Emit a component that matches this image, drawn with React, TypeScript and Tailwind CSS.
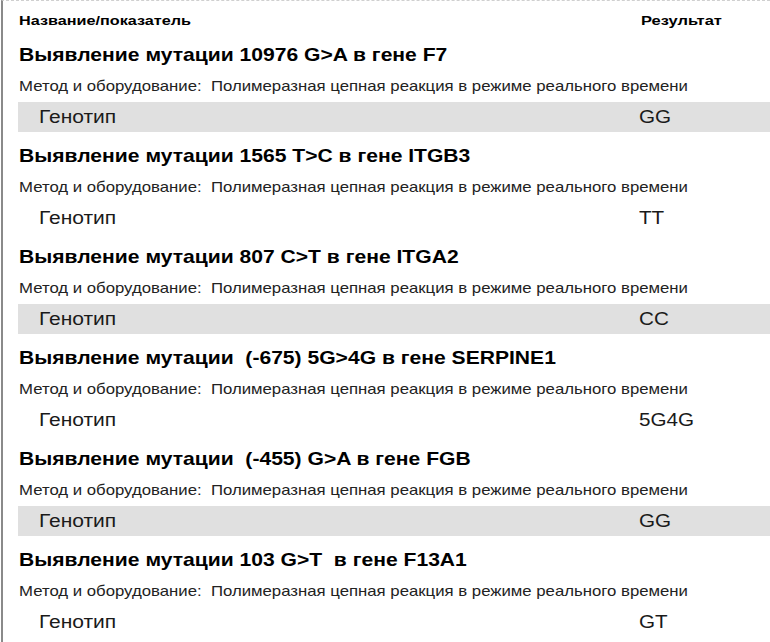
const sections = [
  { title: 'Выявление мутации 10976 G>A в гене F7', value: 'GG' },
  { title: 'Выявление мутации 1565 T>C в гене ITGB3', value: 'TT' },
  { title: 'Выявление мутации 807 C>T в гене ITGA2', value: 'CC' },
  { title: 'Выявление мутации  (-675) 5G>4G в гене SERPINE1', value: '5G4G' },
  { title: 'Выявление мутации  (-455) G>A в гене FGB', value: 'GG' },
  { title: 'Выявление мутации 103 G>T  в гене F13A1', value: 'GT' },
]

export default function App() {
  return (
    <div className="w-[770px] h-[642px] overflow-hidden bg-white text-black font-['Liberation_Sans',Arial,sans-serif]">
      <div className="ml-[1px] h-full border-l-2 border-[#8a8a8a] border-t border-t-[#cfcfcf]" style={{ borderTopStyle: 'dashed' }}>
        <div className="flex h-[38px] items-center pt-[3px] pl-[16px] text-[13.5px] font-bold whitespace-pre">
          <div className="w-[622px]"><span className="inline-block origin-left scale-x-[1.2]">Название/показатель</span></div>
          <div><span className="inline-block origin-left scale-x-[1.22]">Результат</span></div>
        </div>
        {sections.map((s, i) => (
          <div key={i} className="h-[101px] whitespace-pre">
            <div className="flex h-[32px] items-center pl-[16px] text-[18.5px] font-bold">
              <span className="inline-block origin-left scale-x-[1.14]">{s.title}</span>
            </div>
            <div className="flex h-[31px] items-center pl-[16px] text-[14.5px] text-[#222]">
              <span className="inline-block origin-left scale-x-[1.155]">
                Метод и оборудование:  Полимеразная цепная реакция в режиме реального времени
              </span>
            </div>
            <div className={`ml-[15px] flex h-[30px] items-center text-[17.5px] text-[#1a1a1a] ${i % 2 === 0 ? 'bg-[#e0e0e0]' : ''}`}>
              <div className="w-[621px] pl-[21px]"><span className="inline-block origin-left scale-x-[1.2]">Генотип</span></div>
              <div><span className="inline-block origin-left scale-x-[1.18]">{s.value}</span></div>
            </div>
          </div>
        ))}
      </div>
    </div>
  )
}
